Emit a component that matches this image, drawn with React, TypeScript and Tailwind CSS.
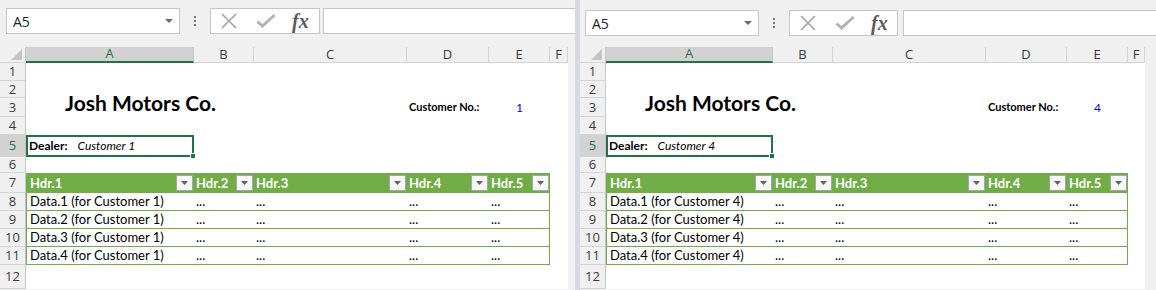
import type { ReactNode } from "react";

const panes = {
  left: {
    width: "w-[575px]",
    bar: "h-[47px] pt-[8px] pl-[6px]",
    grid: "grid grid-rows-1 grid-cols-[26px_168px_60px_153px_82px_61px_18px] w-[568px]",
    fxBox: "w-[110px]",
    formula: "ml-[3px]",
  },
  right: {
    width: "w-[576px]",
    bar: "h-[47px] pt-[10px] pl-[5px]",
    grid: "grid grid-rows-1 grid-cols-[26px_167px_60px_153px_81px_61px_17px] w-[565px]",
    fxBox: "w-[109px]",
    formula: "ml-[5px]",
  },
};

const rowHeights = [
  "h-[18px]",
  "h-[17px]",
  "h-[19px]",
  "h-[18px]",
  "h-[22px]",
  "h-[16px]",
  "h-[20px]",
  "h-[18px]",
  "h-[18px]",
  "h-[18px]",
  "h-[18px]",
  "h-[24px]",
];

const ui = "font-['Open_Sans',sans-serif]";
const cell = "font-['Lato',sans-serif]";

function Row({
  n,
  grid,
  selected,
  children,
}: {
  n: number;
  grid: string;
  selected?: boolean;
  children: ReactNode;
}) {
  return (
    <div className={`${grid} ${rowHeights[n - 1]}`}>
      <div
        className={`flex items-center justify-center border-b border-r border-b-[#d4d4d4] border-r-[#c6c6c6] pt-[1px] text-[13px] ${ui} ${
          selected ? "bg-[#d2d2d2] text-[#217346]" : "bg-[#f0f0f0] text-[#3b3b3b]"
        }`}
      >
        {n}
      </div>
      {children}
    </div>
  );
}

function FilterBtn() {
  return (
    <span className="flex h-[16px] w-[17px] shrink-0 items-center justify-center border border-[#a6a6a6] bg-[#f7f7f7]">
      <svg width="7" height="4" viewBox="0 0 7 4">
        <path d="M0 0h7L3.5 4z" fill="#606060" />
      </svg>
    </span>
  );
}

function HeaderCell({ label, first }: { label: string; first?: boolean }) {
  return (
    <div
      className={`flex items-center justify-between bg-[#70ad47] pr-[1px] text-[13px] font-bold text-white ${cell} ${
        first ? "pl-[4px]" : "pl-[2px]"
      }`}
    >
      <span className="whitespace-nowrap pt-[1px]">{label}</span>
      <FilterBtn />
    </div>
  );
}

function DataCell({
  children,
  first,
  last,
}: {
  children: ReactNode;
  first?: boolean;
  last?: boolean;
}) {
  return (
    <div
      className={`flex items-end whitespace-nowrap bg-white pb-[2px] text-[13px] leading-[15px] text-black shadow-[inset_0_-1px_0_#70ad47] ${cell} ${
        first ? "border-l border-l-[#70ad47] pl-[3px]" : "pl-[2px]"
      } ${last ? "border-r border-r-[#70ad47]" : ""}`}
    >
      {children}
    </div>
  );
}

function Toolbar({ v }: { v: (typeof panes)["left"] }) {
  return (
    <div className={`flex items-start ${v.bar}`}>
      <div className="flex h-[26px] w-[174px] items-center justify-between border border-[#c6c6c6] bg-white pl-[6px] pr-[6px]">
        <span className={`text-[14px] text-[#222] ${ui}`}>A5</span>
        <svg width="8" height="4" viewBox="0 0 8 4">
          <path d="M0 0h8L4 4z" fill="#6a6a6a" />
        </svg>
      </div>
      <div className="flex h-[26px] w-[30px] flex-col items-center justify-center gap-[2px]">
        <span className="h-[2px] w-[2px] bg-[#7a7a7a]" />
        <span className="h-[2px] w-[2px] bg-[#7a7a7a]" />
        <span className="h-[2px] w-[2px] bg-[#7a7a7a]" />
      </div>
      <div
        className={`flex h-[26px] items-center border border-[#c6c6c6] bg-white pl-[9px] ${v.fxBox}`}
      >
        <svg width="18" height="18" viewBox="0 0 18 18">
          <path d="M2 2L16 16M16 2L2 16" stroke="#a3a3a3" strokeWidth="1.6" />
        </svg>
        <svg width="20" height="16" viewBox="0 0 20 16" className="ml-[18px]">
          <path
            d="M1.5 8.5L6.5 13L18.5 2"
            fill="none"
            stroke="#b2b2b2"
            strokeWidth="3"
          />
        </svg>
        <span className="ml-[16px] font-['Liberation_Serif',serif] text-[20px] font-bold italic leading-none text-[#5a5a5a]">
          fx
        </span>
      </div>
      <div
        className={`h-[26px] flex-1 border border-r-0 border-[#c6c6c6] bg-white ${v.formula}`}
      />
    </div>
  );
}

function Pane({ side, customer }: { side: "left" | "right"; customer: number }) {
  const v = panes[side];
  const g = v.grid;
  const letters = ["B", "C", "D", "E", "F"];
  return (
    <div className={`h-[290px] shrink-0 overflow-hidden bg-[#f0f0f0] ${v.width}`}>
      <Toolbar v={v} />

      <div className={`${g} h-[16px]`}>
        <div className="relative border-b border-r border-b-[#d4d4d4] border-r-[#c6c6c6] bg-[#f0f0f0]">
          <svg
            width="11"
            height="11"
            viewBox="0 0 11 11"
            className="absolute bottom-[2px] right-[3px]"
          >
            <path d="M11 0V11H0z" fill="#c4c4c4" />
          </svg>
        </div>
        <div
          className={`flex items-center justify-center border-b-2 border-r border-b-[#217346] border-r-[#c6c6c6] bg-[#d2d2d2] text-[13px] text-[#217346] ${ui}`}
        >
          A
        </div>
        {letters.map((l) => (
          <div
            key={l}
            className={`flex items-center justify-center border-b border-r border-b-[#d4d4d4] border-r-[#d4d4d4] bg-[#f0f0f0] text-[13px] text-[#3b3b3b] ${ui}`}
          >
            {l}
          </div>
        ))}
      </div>

      <Row n={1} grid={g}>
        <div className="col-span-6 bg-white" />
      </Row>
      <Row n={2} grid={g}>
        <div className="col-span-6 bg-white" />
      </Row>
      <Row n={3} grid={g}>
        <div className="col-span-3 flex items-end bg-white pb-[3px] pl-[39px]">
          <span
            className={`whitespace-nowrap text-[21px] font-bold leading-[22px] text-black ${cell}`}
          >
            Josh Motors Co.
          </span>
        </div>
        <div className="flex items-end bg-white pb-[4px] pl-[2px]">
          <span
            className={`whitespace-nowrap text-[11px] font-bold leading-[13px] text-black ${cell}`}
          >
            Customer No.:
          </span>
        </div>
        <div className="flex items-end justify-center bg-white pb-[3px]">
          <span className={`text-[12px] leading-[13px] text-[#0000ff] ${cell}`}>
            {customer}
          </span>
        </div>
        <div className="bg-white" />
      </Row>
      <Row n={4} grid={g}>
        <div className="col-span-6 bg-white" />
      </Row>
      <Row n={5} grid={g} selected>
        <div className="relative z-10 flex items-center border-2 border-[#217346] bg-white pl-[1px]">
          <span className={`text-[12px] font-bold text-black ${cell}`}>Dealer:</span>
          <span className={`ml-[10px] text-[12px] italic text-black ${cell}`}>
            Customer {customer}
          </span>
          <span className="absolute -bottom-[4px] -right-[4px] h-[6px] w-[6px] border border-white bg-[#217346]" />
        </div>
        <div className="col-span-5 bg-white" />
      </Row>
      <Row n={6} grid={g}>
        <div className="col-span-6 bg-white" />
      </Row>
      <Row n={7} grid={g}>
        <HeaderCell label="Hdr.1" first />
        <HeaderCell label="Hdr.2" />
        <HeaderCell label="Hdr.3" />
        <HeaderCell label="Hdr.4" />
        <HeaderCell label="Hdr.5" />
        <div className="bg-white" />
      </Row>
      {[1, 2, 3, 4].map((i) => (
        <Row key={i} n={7 + i} grid={g}>
          <DataCell first>
            Data.{i} (for Customer {customer})
          </DataCell>
          <DataCell>...</DataCell>
          <DataCell>...</DataCell>
          <DataCell>...</DataCell>
          <DataCell last>...</DataCell>
          <div className="bg-white" />
        </Row>
      ))}
      <Row n={12} grid={g}>
        <div className="col-span-6 bg-white" />
      </Row>
    </div>
  );
}

export default function App() {
  return (
    <div className="flex h-[290px] w-[1156px] overflow-hidden bg-[#f0f0f0]">
      <Pane side="left" customer={1} />
      <div className="h-[290px] w-[5px] shrink-0 bg-[#d3d9e5]" />
      <Pane side="right" customer={4} />
    </div>
  );
}
